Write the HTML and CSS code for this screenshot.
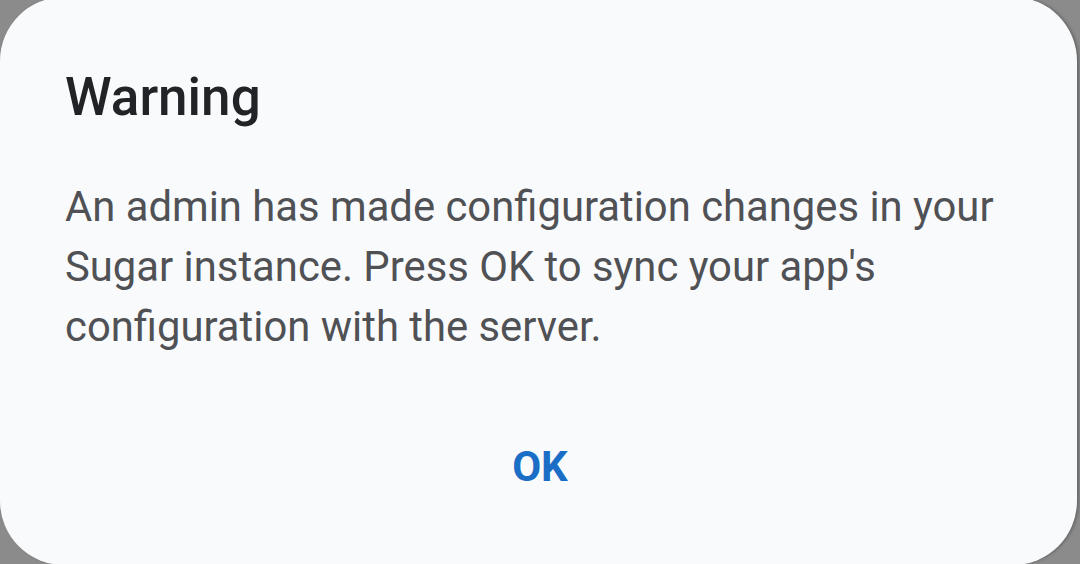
FILE: index.html
```html
<!DOCTYPE html>
<html>
<head>
<meta charset="utf-8">
<link rel="stylesheet" href="styles.css">
</head>
<body>
<div class="dialog">
  <h1 class="title">Warning</h1>
  <p class="message">An admin has made configuration changes in your Sugar instance. Press OK to sync your app's configuration with the server.</p>
  <div class="actions">
    <button class="ok">OK</button>
  </div>
</div>
</body>
</html>
```

FILE: styles.css
```css
html, body {
  margin: 0;
  padding: 0;
  width: 1080px;
  height: 564px;
  overflow: hidden;
  background: #8b8b8b;
}
body {
  font-family: Roboto, "Noto Sans", sans-serif;
}
.dialog {
  box-sizing: border-box;
  margin-top: -3px;
  width: 1077px;
  height: 568px;
  border-radius: 64px;
  background: #f9fafc;
  box-shadow: 2px 0 3px rgba(0,0,0,0.25);
  padding: 70px 40px 0 65px;
  display: flex;
  flex-direction: column;
}
.title {
  margin: 0;
  font-size: 53px;
  font-weight: 500;
  line-height: 60px;
  color: #222326;
}
.message {
  margin: 50px 0 0 0;
  font-size: 41.8px;
  line-height: 60px;
  color: #505155;
}
.actions {
  display: flex;
  justify-content: center;
  margin: 80px -43px 0 -65px;
}
.ok {
  border: none;
  background: none;
  font-family: Roboto, "Noto Sans", sans-serif;
  font-size: 42px;
  font-weight: 700;
  color: #1b6ec6;
  padding: 0;
  line-height: 60px;
}
```
